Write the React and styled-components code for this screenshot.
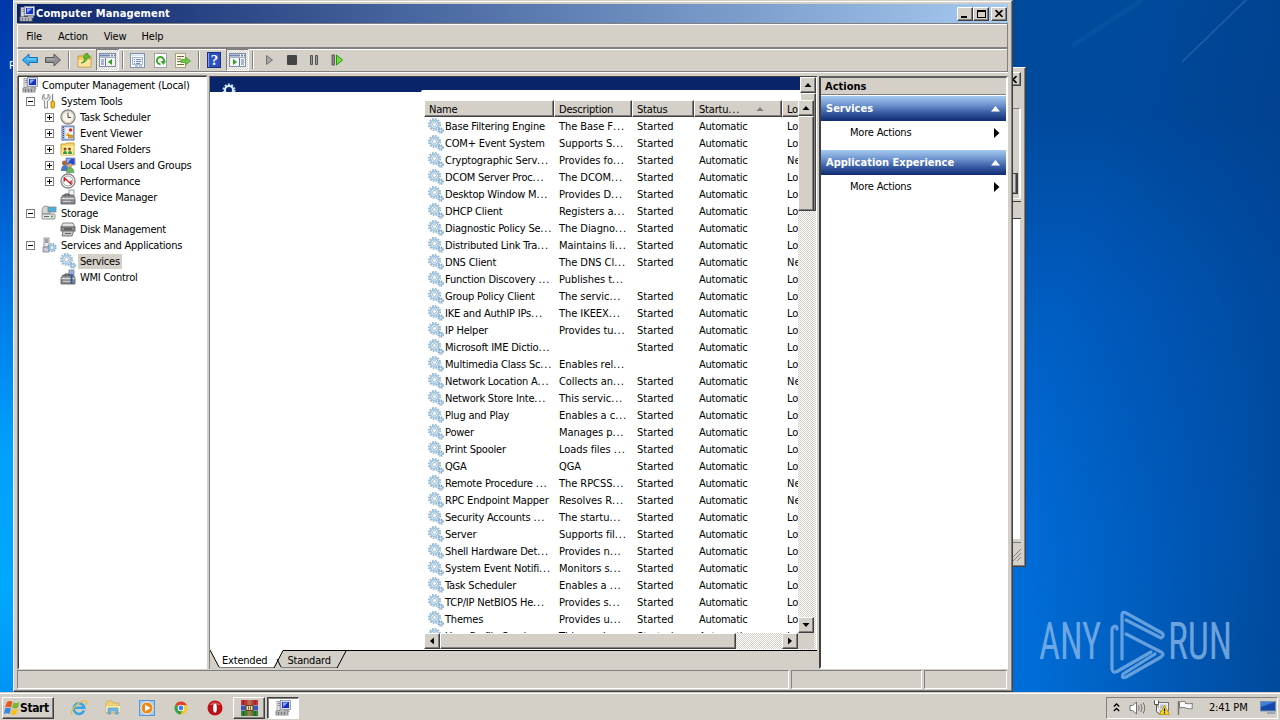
import React from "react";
import styled, { createGlobalStyle, css } from "styled-components";

const GlobalStyle = createGlobalStyle`
  * {
    box-sizing: border-box;
  }
  body {
    margin: 0;
    overflow: hidden;
    font-family: "DejaVu Sans Condensed", "DejaVu Sans", sans-serif;
    font-stretch: condensed;
    font-size: 11px;
    letter-spacing: -0.2px;
    color: #000;
  }
  svg {
    display: block;
    flex: none;
  }
`;

const raised = css`
  background: #d4d0c8;
  border: 1px solid;
  border-color: #fff #404040 #404040 #fff;
  box-shadow: inset -1px -1px 0 #808080;
`;
const sunken = css`
  border: 1px solid;
  border-color: #808080 #fff #fff #808080;
`;
const dither = css`
  background: repeating-conic-gradient(#fff 0 25%, #d4d0c8 0 50%) 0 0 / 2px 2px;
`;

/* ---------- desktop ---------- */

const Desktop = styled.div`
  position: relative;
  width: 1280px;
  height: 720px;
  overflow: hidden;
  background: linear-gradient(104deg, rgba(0, 122, 236, 0) 78%, rgba(0, 52, 120, 0.7) 100%),
    linear-gradient(180deg, #004a9c 0%, #004a9e 16%, #005cc0 42%, #006edc 75%, #0078e8 100%);
`;
const LeftStrip = styled.div`
  position: absolute;
  left: 0;
  top: 0;
  width: 16px;
  height: 692px;
  background: linear-gradient(180deg, #0038a8 0%, #0048b8 18%, #0070e0 38%, #00a0fc 65%, #00a8ff 85%, #0094f4 100%);
`;
const IconCaption = styled.span`
  position: absolute;
  left: 9px;
  top: 59px;
  color: #fff;
`;
const Rays = styled.svg`
  position: absolute;
  left: 1012px;
  top: 0;
`;
const Watermark = styled.svg`
  position: absolute;
  left: 1034px;
  top: 604px;
  overflow: visible;
`;

/* ---------- window behind ---------- */

const BackWindow = styled.div`
  position: absolute;
  left: 900px;
  top: 67px;
  width: 126px;
  height: 500px;
  padding: 4px 4px 3px;
  display: flex;
  flex-direction: column;
  ${raised}
`;
const BackTitle = styled.div`
  height: 18px;
  display: flex;
  justify-content: flex-end;
`;
const BackGroup = styled.div`
  margin-top: 18px;
  height: 91px;
  border: 1px solid;
  border-color: #808080 #fff #fff #808080;
  border-right: 2px solid #fff;
  display: flex;
  align-items: flex-end;
  justify-content: flex-end;
  padding: 0 1px 4px;
`;
const BackButton = styled.div`
  width: 70px;
  height: 21px;
  ${raised}
  border-top: 1px solid #404040;
  border-right: 2px solid #404040;
`;
const BackHeader = styled.div`
  margin-top: 2px;
  height: 18px;
  border-top: 1px solid #404040;
  border-bottom: 1px solid #404040;
`;
const BackBody = styled.div`
  flex: 1;
  background: #fff;
  border-right: 1px solid #d4d0c8;
`;
const BackStatus = styled.div`
  height: 21px;
  border-top: 1px solid #808080;
  margin-top: 3px;
  display: flex;
  align-items: flex-end;
  justify-content: flex-end;
  padding-bottom: 2px;
`;

/* ---------- main window ---------- */

const Window = styled.div`
  position: absolute;
  left: 13px;
  top: 0;
  width: 1000px;
  height: 692px;
  padding: 2px 4px 2px 4px;
  display: flex;
  flex-direction: column;
  background: #d4d0c8;
  border: 1px solid;
  border-color: #d4d0c8 #404040 #404040 #fff;
  box-shadow: inset -1px -1px 0 #808080, inset 0 1px 0 #fff;
`;
const TitleBar = styled.div`
  height: 19px;
  flex: none;
  margin: 1px 0 0 -1px;
  display: flex;
  align-items: center;
  padding: 0 1px 0 2px;
  background: linear-gradient(90deg, #0a246a, #a6caf0);
  color: #fff;
  font-weight: bold;
`;
const TitleText = styled.span`
  flex: 1;
  margin-left: 1px;
  letter-spacing: 0.15px;
`;
const WinButton = styled.div`
  width: 16px;
  height: 14px;
  margin-left: ${(p) => p.$gap || 0}px;
  display: flex;
  align-items: center;
  justify-content: center;
  ${raised}
`;
const Bar = styled.div`
  height: ${(p) => p.$h}px;
  flex: none;
  margin: 0 0 0 -1px;
  display: flex;
  align-items: center;
  border: 1px solid;
  border-color: #808080 #808080 #808080 #fff;
  box-shadow: inset 0 1px 0 #fff, 0 1px 0 #fff;
`;
const MenuItem = styled.span`
  width: ${(p) => p.$w}px;
  padding-top: 2px;
  text-align: center;
`;
const ToolSlot = styled.div`
  width: ${(p) => p.$w}px;
  height: 22px;
  flex: none;
  display: flex;
  align-items: center;
  justify-content: center;
  ${(p) =>
    p.$on &&
    css`
      ${sunken}
      ${dither}
    `}
`;
const ToolSep = styled.div`
  width: 2px;
  height: 18px;
  margin: 0 ${(p) => p.$mr || 4}px 0 ${(p) => p.$ml || 4}px;
  border-left: 1px solid #808080;
  border-right: 1px solid #fff;
`;
const Panes = styled.div`
  flex: 1;
  min-height: 0;
  margin-top: 4px;
  display: flex;
`;

/* tree */
const Tree = styled.div`
  width: 189px;
  flex: none;
  background: #fff;
  border: 1px solid;
  border-color: #404040 #fff #fff #404040;
  box-shadow: 0 -1px 0 #808080, -1px 0 0 #808080;
`;
const TreeRow = styled.div`
  height: 16px;
  display: flex;
  align-items: center;
  padding-left: ${(p) => p.$pad}px;
`;
const Expander = styled.div`
  width: 9px;
  height: 9px;
  margin-right: ${(p) => p.$mr}px;
  border: 1px solid #808080;
  position: relative;
  &::before,
  &::after {
    content: "";
    position: absolute;
    background: #000;
  }
  &::before {
    left: 1px;
    top: 3px;
    width: 5px;
    height: 1px;
  }
  &::after {
    display: ${(p) => (p.$open ? "none" : "block")};
    left: 3px;
    top: 1px;
    width: 1px;
    height: 5px;
  }
`;
const TreeLabel = styled.span`
  margin-left: 2px;
  padding: 0 2px;
  line-height: 15px;
  white-space: nowrap;
  letter-spacing: -0.24px;
  background: ${(p) => (p.$selected ? "#d4d0c8" : "none")};
`;

/* middle */
const Middle = styled.div`
  width: 608px;
  flex: none;
  margin-left: 2px;
  display: flex;
  flex-direction: column;
  border-top: 1px solid #404040;
  border-left: 1px solid #808080;
`;
const View = styled.div`
  height: 574px;
  display: flex;
  background: #fff;
`;
const Extended = styled.div`
  width: 590px;
  flex: none;
`;
const Banner = styled.div`
  height: 15px;
  padding: 5px 0 0 11px;
  background: #0a246a;
  overflow: hidden;
`;
const BannerCurve = styled.div`
  height: 2px;
  margin: -2px 0 0 211px;
  position: relative;
  background: #fff;
  border-radius: 3px 0 0 0;
`;
const List = styled.div`
  position: relative;
  margin: 8px 0 0 214px;
  width: 390px;
  height: 549px;
  display: grid;
  grid-template: 533px 16px / 374px 16px;
`;
const Table = styled.div`
  overflow: hidden;
  background: #fff;
`;
const columns = "130px 78px 62px 88px 60px";
const HeadRow = styled.div`
  display: grid;
  grid-template-columns: ${columns};
  width: 418px;
  height: 17px;
  margin-bottom: 1px;
`;
const HeadCell = styled.div`
  display: flex;
  align-items: center;
  justify-content: space-between;
  padding: 1px 17px 0 4px;
  ${raised}
`;
const Row = styled.div`
  display: grid;
  grid-template-columns: ${columns};
  width: 418px;
  height: 17px;
  align-items: center;
`;
const Cell = styled.div`
  display: flex;
  align-items: center;
  padding-left: ${(p) => (p.$first ? 4 : 5)}px;
  white-space: pre;
  letter-spacing: ${(p) => p.$ls || 0}px;
  svg {
    margin: -1px 1px 0 0;
  }
`;
const Dots = styled.span`
  letter-spacing: 0.8px;
`;
const Scroll = styled.div`
  display: flex;
  flex-direction: ${(p) => (p.$row ? "row" : "column")};
  ${dither}
`;
const ScrollButton = styled.div`
  width: 16px;
  height: 16px;
  flex: none;
  display: flex;
  align-items: center;
  justify-content: center;
  ${raised}
`;
const Thumb = styled.div`
  width: ${(p) => (p.$w ? `${p.$w}px` : "auto")};
  height: ${(p) => (p.$h ? `${p.$h}px` : "auto")};
  ${raised}
`;
const Fill = styled.div`
  flex: 1;
`;
const Corner = styled.div`
  background: #d4d0c8;
`;
const Tabs = styled.div`
  flex: 1;
  display: flex;
  align-items: flex-start;
  position: relative;
`;
const TabShapes = styled.svg`
  position: absolute;
  left: 0;
  top: -1px;
`;
const TabLabel = styled.span`
  position: relative;
  margin: 2px 0 0 ${(p) => p.$ml}px;
  line-height: 15px;
`;

/* actions */
const Actions = styled.div`
  width: 190px;
  margin-left: 2px;
  background: #fff;
  border: 2px solid;
  border-color: #606060 #fff #fff #404040;
`;
const ActionsTitle = styled.div`
  height: 17px;
  padding: 1px 0 0 4px;
  line-height: 15px;
  font-weight: bold;
  letter-spacing: 0;
  background: #d4d0c8;
  border-bottom: 1px solid #808080;
`;
const ActionsHead = styled.div`
  height: 25px;
  margin-top: 1px;
  padding: 0 6px 0 5px;
  display: flex;
  align-items: center;
  justify-content: space-between;
  color: #fff;
  font-weight: bold;
  letter-spacing: 0;
  background: linear-gradient(180deg, #a6caf0 0%, #6f95cf 35%, #3c5fa6 65%, #0f2a70 100%);
`;
const ActionsItem = styled.div`
  height: 28px;
  padding: 0 6px 5px 29px;
  display: flex;
  align-items: center;
  justify-content: space-between;
`;

const StatusBar = styled.div`
  height: 19px;
  flex: none;
  margin: 1px 0 0 -1px;
  display: flex;
  gap: 2px;
`;
const StatusCell = styled.div`
  width: ${(p) => p.$w}px;
  ${sunken}
`;

/* ---------- taskbar ---------- */

const Taskbar = styled.div`
  position: absolute;
  left: 0;
  top: 692px;
  width: 1280px;
  height: 28px;
  padding: 2px 2px 0 2px;
  display: flex;
  align-items: center;
  background: #d4d0c8;
  border-top: 1px solid #d4d0c8;
  box-shadow: inset 0 1px 0 #fff;
`;
const StartButton = styled.div`
  width: 52px;
  height: 22px;
  margin-right: 8px;
  padding-left: 1px;
  display: flex;
  align-items: center;
  font-weight: bold;
  font-size: 12px;
  letter-spacing: -0.4px;
  ${raised}
`;
const Quick = styled.div`
  width: ${(p) => p.$w || 34}px;
  display: flex;
  justify-content: center;
`;
const TaskButton = styled.div`
  width: 32px;
  height: 22px;
  margin: 0 1px;
  display: flex;
  align-items: center;
  justify-content: center;
  ${raised}
  ${(p) =>
    p.$active &&
    css`
      background: #fff;
      border-color: #404040 #fff #fff #404040;
      box-shadow: inset 1px 1px 0 #808080;
    `}
`;
const Tray = styled.div`
  width: 172px;
  height: 22px;
  margin-left: auto;
  padding: 0 1px 0 6px;
  display: flex;
  align-items: center;
  ${sunken}
`;
const Clock = styled.span`
  width: 43px;
  margin: 0 8px 0 7px;
  white-space: nowrap;
`;

/* ---------- icons ---------- */

const ComputerIcon = () => (
  <svg width="16" height="16" viewBox="0 0 16 16">
    <rect x="5.500" y=".5" width="10" height="9" fill="#d8dce8" stroke="#8890a8" strokeWidth=".8" />
    <rect x="7" y="2" width="7" height="6" fill="#1830c0" />
    <path d="M8 7V2.500h5z" fill="#88a8f8" />
    <path d="M9 10h5l1 2H8z" fill="#b8bcc8" />
    <rect x="2" y="1.500" width="3" height="9" fill="#e4e4e4" stroke="#999" strokeWidth=".8" />
    <path d="M3 3.500h2M3 5.500h2" stroke="#667" strokeWidth=".7" />
    <rect x="1" y="11" width="12" height="4" fill="#e0e0e0" stroke="#777" strokeWidth=".8" />
    <path d="M3.500 12v3M6.500 12v3M9.500 12v3M1 13h12" stroke="#667" strokeWidth=".8" />
  </svg>
);

const GearIcon = () => (
  <svg width="16" height="16" viewBox="0 0 16 16" fill="none">
    <circle cx="6.500" cy="6.500" r="5.600" stroke="#8cb0cc" strokeWidth="1.700" strokeDasharray="1.700 1.200" />
    <circle cx="6.500" cy="6.500" r="4" stroke="#a4c6de" strokeWidth="1.800" fill="#eef6fc" />
    <circle cx="6.500" cy="6.500" r="2" stroke="#7fa4c4" strokeWidth=".7" fill="#fff" />
    <circle cx="12.600" cy="12.600" r="2.500" stroke="#7ba2c4" strokeWidth="1.400" strokeDasharray="1.200 .8" />
    <circle cx="12.600" cy="12.600" r="1.500" stroke="#7eaad0" fill="#dcecf8" />
  </svg>
);

const ToolsIcon = () => (
  <svg width="16" height="16" viewBox="0 0 16 16">
    <path d="M3 1v4l2 1 2-1V1l2 2v3L6.500 8v7h-3V8L1.500 6V3z" fill="#f0f0f0" stroke="#777" strokeWidth=".8" />
    <path d="M11.500 1v7" stroke="#889" strokeWidth="1.300" />
    <rect x="10" y="8" width="3.400" height="7" rx="1" fill="#f4c020" stroke="#a87808" strokeWidth=".8" />
  </svg>
);
const ClockIcon = () => (
  <svg width="16" height="16" viewBox="0 0 16 16" fill="none">
    <circle cx="8" cy="8" r="7" fill="#f8f4e8" stroke="#8a8a8a" strokeWidth="1.400" />
    <circle cx="8" cy="8" r="5.600" stroke="#d8d0b8" />
    <path d="M8 3.500V8.500h3" stroke="#446" />
  </svg>
);
const EventIcon = () => (
  <svg width="16" height="16" viewBox="0 0 16 16">
    <rect x="2" y="1" width="12" height="14" fill="#b4c8ec" stroke="#5870a0" />
    <path d="M3.500 2v12" stroke="#445" strokeDasharray="1 1" />
    <rect x="5.500" y="2.500" width="7.500" height="11" fill="#f4f4ff" />
    <circle cx="10.500" cy="5" r="1.800" fill="#d83020" />
    <path d="M8 7l2.500 4h-5z" fill="#f0b820" />
    <rect x="8.500" y="10" width="4" height="3" fill="#e8a020" stroke="#a06000" strokeWidth=".5" />
  </svg>
);
const SharedIcon = () => (
  <svg width="16" height="16" viewBox="0 0 16 16">
    <path d="M1 3h5l1-1h7v12H1z" fill="#f6d868" stroke="#c8a030" />
    <path d="M3 5h11l-1 9H1z" fill="#fbe898" />
    <circle cx="5" cy="8" r="1.500" fill="#805020" />
    <circle cx="9.500" cy="8" r="1.500" fill="#805020" />
    <path d="M3 13q0-3 2-3t2 3zM8 13q0-3 2-3t2 3z" fill="#2c9848" />
  </svg>
);
const UsersIcon = () => (
  <svg width="16" height="16" viewBox="0 0 16 16">
    <rect x="6" y="1" width="9" height="7" fill="#2848c8" stroke="#a0a8c0" />
    <path d="M7 7V2h4z" fill="#90b0f8" />
    <circle cx="4.500" cy="6" r="2.500" fill="#a86830" />
    <path d="M1 14q0-6 4-6t4 6z" fill="#5078c0" />
    <circle cx="10" cy="8.500" r="2.200" fill="#d8a860" />
    <path d="M6.500 15.500q0-5 3.500-5t4 5z" fill="#70b860" stroke="#387838" strokeWidth=".5" />
  </svg>
);
const PerfIcon = () => (
  <svg width="16" height="16" viewBox="0 0 16 16" fill="none">
    <circle cx="8" cy="8" r="7" fill="#fff" stroke="#888" strokeWidth="1.300" />
    <circle cx="8" cy="8" r="5" stroke="#888" strokeWidth=".8" />
    <path d="M4.500 8.500V5l6.500 6V7.500" stroke="#d01818" strokeWidth="1.400" />
  </svg>
);
const DeviceIcon = ({ tool }) => (
  <svg width="16" height="16" viewBox="0 0 16 16">
    <rect x="9" y="1" width="5" height="9" fill={tool ? "#90b0e0" : "#f4f4f4"} stroke="#889" strokeWidth=".8" />
    <path d="M1 9l2-3h10l2 3v6H1z" fill="#888c90" stroke="#555" strokeWidth=".8" />
    <path d="M1.500 9.500h13" stroke="#dcdcdc" strokeWidth="1.400" />
    <path d="M5 7V5h4v2" fill="none" stroke="#444" />
    <path d="M3 12.500h8" stroke="#ccc" />
    {tool && <path d="M11.500 5v10" stroke="#3858a8" strokeWidth="2" />}
  </svg>
);
const StorageIcon = () => (
  <svg width="16" height="16" viewBox="0 0 16 16">
    <path d="M1 6q0-5 4-5t4 4v4H1z" fill="#d4d4d4" stroke="#888" strokeWidth=".8" />
    <rect x="7" y="2" width="8" height="5" fill="#48b0d8" stroke="#888" strokeWidth=".8" />
    <rect x="1" y="9" width="13" height="5" rx="1" fill="#e4e4e4" stroke="#777" strokeWidth=".8" />
    <circle cx="11" cy="11.500" r="1" fill="#38a030" />
    <path d="M3 11.500h5" stroke="#666" />
  </svg>
);
const DiskIcon = () => (
  <svg width="16" height="16" viewBox="0 0 16 16">
    <path d="M3 2h10l2 4H1z" fill="#e4e4e4" stroke="#666" strokeWidth=".8" />
    <rect x="1" y="6" width="14" height="4" fill="#909090" stroke="#555" strokeWidth=".8" />
    <path d="M4 8h8" stroke="#333" />
    <path d="M3 10h11l-2 5H2z" fill="#c4c4c4" stroke="#666" strokeWidth=".8" />
    <path d="M5 12.500h6" stroke="#666" />
  </svg>
);
const AppsIcon = () => (
  <svg width="16" height="16" viewBox="0 0 16 16" fill="none">
    <rect x="3" y="1" width="5" height="9" fill="#e8e8e8" stroke="#888" strokeWidth=".8" />
    <path d="M4 3h3M4 5h3" stroke="#556" />
    <path d="M2 10h6v5H2z" fill="#c8ccd4" stroke="#778" strokeWidth=".8" />
    <circle cx="11" cy="10.500" r="3.800" stroke="#7aa4c8" strokeWidth="1.600" strokeDasharray="1.600 1" />
    <circle cx="11" cy="10.500" r="2.300" stroke="#94bcdc" strokeWidth="1.600" fill="#eef6fc" />
  </svg>
);

const Arrow = ({ forward }) => (
  <svg width="16" height="14" viewBox="0 0 16 14">
    <path
      d={forward ? "M15.500 7L9 1v3.500H.5v5H9V13z" : "M.5 7L7 1v3.500h8.500v5H7V13z"}
      fill={forward ? "#909090" : "#38b0f0"}
      stroke={forward ? "#585858" : "#1870b8"}
      strokeWidth="1"
    />
    <path d={forward ? "M2 6h8" : "M5 6h9"} stroke={forward ? "#b8b8b8" : "#90dcff"} />
  </svg>
);
const UpFolderIcon = () => (
  <svg width="16" height="16" viewBox="0 0 16 16">
    <path d="M1 4h5l1-2h4v2h3v11H1z" fill="#f4cc60" stroke="#b89030" strokeWidth=".8" />
    <path d="M1.500 8h12v6.500h-12z" fill="#fce49c" />
    <path d="M4 11q3 0 4-5l-2-.5L10 1l3 5-2.500-.2Q9 11 4 11z" fill="#58c030" stroke="#2c8c18" strokeWidth=".7" />
  </svg>
);
const PaneIcon = ({ flip }) => (
  <svg width="17" height="14" viewBox="0 0 17 14">
    <rect x=".5" y=".5" width="16" height="13" fill="#f4f4f4" stroke="#8090a8" />
    <path d="M1 2.500h15" stroke="#7088b0" strokeWidth="2" strokeDasharray="10 1 2 1" />
    <path d="M1 4.500h15" stroke="#a8b4c8" />
    <path d={flip ? "M10.500 5v8M12 7h3M12 9h3M12 11h3" : "M6.500 5v8M2 7h3M2 9h3M2 11h3"} stroke="#6078a0" />
    <path d={flip ? "M4 6v6l4-3z" : "M13 6v6L9 9z"} fill="#30a020" />
  </svg>
);
const PropsIcon = () => (
  <svg width="15" height="15" viewBox="0 0 15 15">
    <rect x=".5" y=".5" width="14" height="14" fill="#fff" stroke="#8094b0" />
    <path d="M1 2h13" stroke="#c4d0e4" />
    <rect x="2.500" y="4.500" width="10" height="7" fill="#f0f4fc" stroke="#90a4c4" strokeWidth=".8" />
    <path d="M4 6.500h1M6 6.500h5M4 8.500h1M6 8.500h5M4 10.500h1M6 10.500h4M5 13h3M9 13h3" stroke="#6080b0" strokeWidth=".9" />
  </svg>
);
const RefreshIcon = () => (
  <svg width="13" height="15" viewBox="0 0 13 15" fill="none">
    <rect x=".5" y=".5" width="12" height="14" fill="#fff" stroke="#a0a0a8" />
    <path d="M6.500 11.200A3.600 3.600 0 1 1 10 8" stroke="#38a828" strokeWidth="1.900" />
    <path d="M6.500 8h5.500l-2.500 4z" fill="#38a828" />
  </svg>
);
const ExportIcon = () => (
  <svg width="16" height="15" viewBox="0 0 16 15">
    <rect x=".5" y=".5" width="10" height="14" fill="#fffbe4" stroke="#a8a088" />
    <path d="M2 3.500h7M2 6h4M2 8.500h4M2 11.500h7" stroke="#706848" />
    <path d="M6 6.500h4.500V4l5 4-5 4V9.500H6z" fill="#68c840" stroke="#38901c" strokeWidth=".6" />
  </svg>
);
const HelpIcon = () => (
  <svg width="14" height="16" viewBox="0 0 14 16">
    <rect x=".5" y=".5" width="13" height="15" fill="#2c50c0" stroke="#183080" />
    <path d="M1.500 1v14" stroke="#88a0e8" />
    <text x="7.500" y="13" fontSize="15" fontWeight="bold" fill="#fff" textAnchor="middle" fontFamily="Liberation Serif, serif">?</text>
  </svg>
);
const PlayIcon = () => (
  <svg width="9" height="12" viewBox="0 0 9 12">
    <path d="M1.500 1.500v9l6-4.500z" fill="#a8a8a8" stroke="#707070" />
  </svg>
);
const ResumeIcon = () => (
  <svg width="13" height="12" viewBox="0 0 13 12">
    <rect x="1" y="1" width="2.500" height="10" fill="#888" stroke="#444" strokeWidth=".7" />
    <path d="M5.500 1v10l6-5z" fill="#70e040" stroke="#209810" />
  </svg>
);
const StopIcon = () => (
  <svg width="10" height="10" viewBox="0 0 10 10">
    <rect width="10" height="10" rx="1" fill="#444" />
  </svg>
);
const PauseIcon = () => (
  <svg width="9" height="10" viewBox="0 0 9 10">
    <path d="M.5.5h2v9h-2zM5.500.5h2v9h-2z" fill="#999" stroke="#555" />
  </svg>
);
const Triangle = ({ dir, color = "#000" }) => {
  const turn = { up: 0, right: 90, down: 180, left: 270 }[dir];
  return (
    <svg width="8" height="8" viewBox="0 0 8 8">
      <path d="M4 2L7.500 6h-7z" fill={color} transform={`rotate(${turn} 4 4)`} />
    </svg>
  );
};
const MoreArrow = () => (
  <svg width="6" height="10" viewBox="0 0 6 10">
    <path d="M0 0v10l5.500-5z" />
  </svg>
);
const CollapseArrow = () => (
  <svg width="9" height="6" viewBox="0 0 9 6">
    <path d="M0 5.500h9L4.500 0z" fill="#fff" />
  </svg>
);
const CloseGlyph = () => (
  <svg width="8" height="7" viewBox="0 0 8 7">
    <path d="M.5 0l7 7M7.500 0l-7 7" stroke="#000" strokeWidth="1.600" />
  </svg>
);

/* taskbar icons */
const WindowsLogo = () => (
  <svg width="16" height="16" viewBox="0 0 16 16">
    <path d="M3 2q3-2 5.500 0L7 7.500q-3-1.500-6 0z" fill="#e85820" />
    <path d="M9.500 2.500q3 1.500 6-.5L14 7.500q-3 2-6 0z" fill="#78b830" />
    <path d="M1 8.500q3-1.500 6 0L5.500 14Q3 12.500 0 14z" fill="#3888e0" />
    <path d="M8 9q3 1.500 6 0l-1.500 5q-3 2-6 0z" fill="#f8c020" />
  </svg>
);
const IeIcon = () => (
  <svg width="18" height="17" viewBox="0 0 18 17" fill="none">
    <path d="M14 11.500A5.300 5.300 0 1 1 14.300 8.800H5" stroke="#38a4e4" strokeWidth="2.500" />
    <path d="M2 15.500Q-.5 13 6 6.500T16.500 2Q17.500 4 15 6" stroke="#e8c040" strokeWidth="1.300" />
  </svg>
);
const ExplorerIcon = () => (
  <svg width="16" height="15" viewBox="0 0 16 15">
    <path d="M1 3l1-2h5l1 2h6v10H1z" fill="#ecd078" stroke="#c8a850" strokeWidth=".7" />
    <path d="M1 6h14v6H1z" fill="#f8e8a8" />
    <path d="M3 14V9q0-1 1-1h8q1 0 1 1v5h-2.500v-3h-5v3z" fill="#70b8e8" stroke="#4890c8" strokeWidth=".6" />
  </svg>
);
const MediaIcon = () => (
  <svg width="16" height="16" viewBox="0 0 16 16">
    <rect x=".5" y=".5" width="15" height="15" fill="#a0ccf0" stroke="#5898d0" />
    <circle cx="8" cy="8" r="6" fill="#f08818" stroke="#fff" strokeWidth=".8" />
    <path d="M6 4.500v7L11.500 8z" fill="#fff" />
  </svg>
);
const ChromeIcon = () => (
  <svg width="14" height="14" viewBox="0 0 14 14">
    <circle cx="7" cy="7" r="6.500" fill="#f8c820" />
    <path d="M7 7L1.400 3.700A6.500 6.500 0 0 1 12.800 4H7z" fill="#e04030" />
    <path d="M1.400 3.700A6.500 6.500 0 0 0 6.500 13.500L9 9z" fill="#38a050" />
    <circle cx="7" cy="7" r="3.300" fill="#fff" />
    <circle cx="7" cy="7" r="2.400" fill="#4080e8" />
  </svg>
);
const OperaIcon = () => (
  <svg width="16" height="16" viewBox="0 0 16 16">
    <circle cx="8" cy="8" r="7.500" fill="#c01018" />
    <path d="M2.500 5Q8-1 13.500 5" fill="#e86060" />
    <ellipse cx="8" cy="8" rx="2.300" ry="5.200" fill="#fff" stroke="#800008" strokeWidth=".8" />
  </svg>
);
const RarIcon = () => (
  <svg width="17" height="16" viewBox="0 0 17 16">
    <path d="M0 0h17v5H0z" fill="#c83040" />
    <path d="M0 5.500h17v5H0z" fill="#3858b8" />
    <path d="M0 11h17v5H0z" fill="#308838" />
    <rect x="6.500" width="4" height="16" fill="#a87840" />
    <rect x="5" y="5.500" width="7" height="5" fill="#e8d8a8" stroke="#604010" />
    <path d="M7.500 6.500v3M9.500 6.500v3M2.500 0v5M14 0v5M2.500 11v5M14 11v5" stroke="#402810" strokeWidth=".7" />
  </svg>
);
const ChevronsIcon = () => (
  <svg width="7" height="9" viewBox="0 0 7 9" fill="none" stroke="#000" strokeWidth="1.300">
    <path d="M.8 3.500l2.700-2.500 2.700 2.500M.8 8l2.700-2.500L6.200 8" />
  </svg>
);
const SpeakerIcon = () => (
  <svg width="17" height="14" viewBox="0 0 17 14" fill="none" stroke="#707070">
    <path d="M1 4.500h2.500L7.500 1v12L3.500 9.500H1z" fill="#fff" />
    <path d="M9.500 4.500q1.500 2.500 0 5M11.800 3q2.500 4 0 8M14 1.500q3.500 5.500 0 11" />
  </svg>
);
const NetworkIcon = () => (
  <svg width="17" height="15" viewBox="0 0 17 15">
    <rect x="5" y="2.500" width="10.500" height="8.500" fill="#f0f0f0" stroke="#777" />
    <rect x="7" y="4.500" width="6.500" height="4.500" fill="#c0c4c8" />
    <path d="M1.500.5v4h4v-4M3.500 4.500V11q0 2.500 4 2.500" fill="#fff" stroke="#555" />
    <path d="M11.500 5.500l5 9h-10z" fill="#f8d818" stroke="#a88800" strokeWidth=".7" />
    <path d="M11.500 8.500v3M11.500 12.300v1.200" stroke="#000" strokeWidth="1.200" />
  </svg>
);
const FlagIcon = () => (
  <svg width="17" height="15" viewBox="0 0 17 15">
    <path d="M2.500 2q3-1.500 6 0v1.500q4 .5 7 0-1 3 0 5-3 1-7-.5-3-1.500-6 0z" fill="#fff" stroke="#777" />
    <path d="M1.500 1v14" stroke="#777" strokeWidth="1.500" />
  </svg>
);
const ScreenIcon = () => (
  <svg width="16" height="13" viewBox="0 0 16 13">
    <rect x=".5" y=".5" width="15" height="9.500" fill="#1448a8" stroke="#7890b0" />
    <path d="M1 1h14L1 6z" fill="#3c80d8" />
    <path d="M7 12h8" stroke="#8898b0" strokeWidth="1.500" />
  </svg>
);

/* ---------- data ---------- */

const tree = [
  { label: "Computer Management (Local)", icon: ComputerIcon, pad: 3 },
  { label: "System Tools", icon: ToolsIcon, level: 1, open: true },
  { label: "Task Scheduler", icon: ClockIcon, level: 2 },
  { label: "Event Viewer", icon: EventIcon, level: 2 },
  { label: "Shared Folders", icon: SharedIcon, level: 2 },
  { label: "Local Users and Groups", icon: UsersIcon, level: 2 },
  { label: "Performance", icon: PerfIcon, level: 2 },
  { label: "Device Manager", icon: DeviceIcon, pad: 41 },
  { label: "Storage", icon: StorageIcon, level: 1, open: true },
  { label: "Disk Management", icon: DiskIcon, pad: 41 },
  { label: "Services and Applications", icon: AppsIcon, level: 1, open: true },
  { label: "Services", icon: GearIcon, pad: 41, selected: true },
  { label: "WMI Control", icon: () => <DeviceIcon tool />, pad: 41 },
];

const services = [
  ["Base Filtering Engine", "The Base F...", 1, "Lo"],
  ["COM+ Event System", "Supports S...", 1, "Lo"],
  ["Cryptographic Serv...", "Provides fo...", 1, "Ne"],
  ["DCOM Server Proc...", "The DCOM...", 1, "Lo"],
  ["Desktop Window M...", "Provides D...", 1, "Lo"],
  ["DHCP Client", "Registers a...", 1, "Lo"],
  ["Diagnostic Policy Se...", "The Diagno...", 1, "Lo"],
  ["Distributed Link Tra...", "Maintains li...", 1, "Lo"],
  ["DNS Client", "The DNS Cl...", 1, "Ne"],
  ["Function Discovery ...", "Publishes t...", 0, "Lo"],
  ["Group Policy Client", "The servic...", 1, "Lo"],
  ["IKE and AuthIP IPs...", "The IKEEX...", 1, "Lo"],
  ["IP Helper", "Provides tu...", 1, "Lo"],
  ["Microsoft IME Dictio...", "", 1, "Lo"],
  ["Multimedia Class Sc...", "Enables rel...", 0, "Lo"],
  ["Network Location A...", "Collects an...", 1, "Ne"],
  ["Network Store Inte...", "This servic...", 1, "Lo"],
  ["Plug and Play", "Enables a c...", 1, "Lo"],
  ["Power", "Manages p...", 1, "Lo"],
  ["Print Spooler", "Loads files ...", 1, "Lo"],
  ["QGA", "QGA", 1, "Lo"],
  ["Remote Procedure ...", "The RPCSS...", 1, "Ne"],
  ["RPC Endpoint Mapper", "Resolves R...", 1, "Ne"],
  ["Security Accounts ...", "The startu...", 1, "Lo"],
  ["Server", "Supports fil...", 1, "Lo"],
  ["Shell Hardware Det...", "Provides n...", 1, "Lo"],
  ["System Event Notifi...", "Monitors s...", 1, "Lo"],
  ["Task Scheduler", "Enables a ...", 1, "Lo"],
  ["TCP/IP NetBIOS He...", "Provides s...", 1, "Lo"],
  ["Themes", "Provides u...", 1, "Lo"],
  ["User Profile Service", "This servic...", 1, "Lo"],
];

// the dots of a trimmed text are set wider than the text itself
const Trimmed = ({ text }) => {
  if (!text.endsWith("...")) return <span>{text}</span>;
  return (
    <span>
      {text.slice(0, -3)}
      <Dots>...</Dots>
    </span>
  );
};

const ServiceList = () => (
  <List>
    <Table>
      <HeadRow>
        <HeadCell>Name</HeadCell>
        <HeadCell>Description</HeadCell>
        <HeadCell>Status</HeadCell>
        <HeadCell>
          <Trimmed text="Startu..." /> <Triangle dir="up" color="#808080" />
        </HeadCell>
        <HeadCell>Lo</HeadCell>
      </HeadRow>
      {services.map(([name, description, started, logOn]) => (
        <Row key={name}>
          <Cell $first $ls={-0.2}>
            <GearIcon />
            <Trimmed text={name} />
          </Cell>
          <Cell $ls={-0.05}>
            <Trimmed text={description} />
          </Cell>
          <Cell>{started ? "Started" : ""}</Cell>
          <Cell $ls={-0.25}>Automatic</Cell>
          <Cell>{logOn}</Cell>
        </Row>
      ))}
    </Table>
    <Scroll>
      <ScrollButton>
        <Triangle dir="up" />
      </ScrollButton>
      <Thumb $h={95} />
      <Fill />
      <ScrollButton>
        <Triangle dir="down" />
      </ScrollButton>
    </Scroll>
    <Scroll $row>
      <ScrollButton>
        <Triangle dir="left" />
      </ScrollButton>
      <Thumb $w={296} />
      <Fill />
      <ScrollButton>
        <Triangle dir="right" />
      </ScrollButton>
    </Scroll>
    <Corner />
  </List>
);

const App = () => {
  return (
    <Desktop>
      <GlobalStyle />
      <LeftStrip />
      <IconCaption>P</IconCaption>
      <Rays width="268" height="180">
        <path d="M238-4L170 62" stroke="#6ca0d0" strokeOpacity=".3" strokeWidth="1.500" />
        <path d="M130 0L60 46" stroke="#4c90c0" strokeOpacity=".1" strokeWidth="5" />
      </Rays>
      <Watermark width="204" height="76" fill="none">
        <g fill="#90bcec" fillOpacity=".75" fontFamily="Roboto, sans-serif" fontSize="52" fontWeight="400">
          <text x="5" y="55" textLength="62" lengthAdjust="spacingAndGlyphs">ANY</text>
          <text x="134" y="55" textLength="64" lengthAdjust="spacingAndGlyphs">RUN</text>
        </g>
        <g stroke="#90bcec" strokeOpacity=".7" strokeWidth="3.200" strokeLinecap="round" strokeLinejoin="round">
          <path d="M83 25q0-4-3-2.500-2 1-2 4v38q0 5 5 3L117 48" />
          <path d="M88 55V22 11q0-4 4-2l36 20q3 3-1 5L92 16" />
          <path d="M92 30l35 18q4 2 0 5L92 73q-5 2-3-3l32-20" />
        </g>
      </Watermark>

      <BackWindow>
        <BackTitle>
          <WinButton>
            <CloseGlyph />
          </WinButton>
        </BackTitle>
        <BackGroup>
          <BackButton />
        </BackGroup>
        <BackHeader />
        <BackBody />
        <BackStatus>
          <svg width="12" height="12" stroke="#808080">
            <path d="M0 12L12 0M4 12l8-8M8 12l4-4" />
          </svg>
        </BackStatus>
      </BackWindow>

      <Window>
        <TitleBar>
          <ComputerIcon />
          <TitleText>Computer Management</TitleText>
          <WinButton>
            <svg width="8" height="8">
              <path d="M0 6h6v2H0z" />
            </svg>
          </WinButton>
          <WinButton>
            <svg width="9" height="8">
              <path d="M0 0h9v8H0zM1 2v5h7V2z" fillRule="evenodd" />
            </svg>
          </WinButton>
          <WinButton $gap={2}>
            <CloseGlyph />
          </WinButton>
        </TitleBar>
        <Bar $h={25}>
          <MenuItem $w={32}>File</MenuItem>
          <MenuItem $w={46}>Action</MenuItem>
          <MenuItem $w={38}>View</MenuItem>
          <MenuItem $w={37}>Help</MenuItem>
        </Bar>
        <Bar $h={24}>
          <ToolSlot $w={24}>
            <Arrow />
          </ToolSlot>
          <ToolSlot $w={22}>
            <Arrow forward />
          </ToolSlot>
          <ToolSep />
          <ToolSlot $w={22}>
            <UpFolderIcon />
          </ToolSlot>
          <ToolSlot $w={23} $on>
            <PaneIcon />
          </ToolSlot>
          <ToolSep $ml={3} $mr={2} />
          <ToolSlot $w={22}>
            <PropsIcon />
          </ToolSlot>
          <ToolSlot $w={24}>
            <RefreshIcon />
          </ToolSlot>
          <ToolSlot $w={22}>
            <ExportIcon />
          </ToolSlot>
          <ToolSep $mr={2} />
          <ToolSlot $w={24}>
            <HelpIcon />
          </ToolSlot>
          <ToolSlot $w={23} $on>
            <PaneIcon flip />
          </ToolSlot>
          <ToolSep $ml={3} />
          <ToolSlot $w={22}>
            <PlayIcon />
          </ToolSlot>
          <ToolSlot $w={23}>
            <StopIcon />
          </ToolSlot>
          <ToolSlot $w={23}>
            <PauseIcon />
          </ToolSlot>
          <ToolSlot $w={23}>
            <ResumeIcon />
          </ToolSlot>
        </Bar>

        <Panes>
          <Tree>
            {tree.map(({ label, icon: Icon, level, open, pad, selected }) => (
              <TreeRow key={label} $pad={level ? 7 + (level - 1) * 19 : pad}>
                {level && <Expander $open={open} $mr={6} />}
                <Icon />
                <TreeLabel $selected={selected}>{label}</TreeLabel>
              </TreeRow>
            ))}
          </Tree>

          <Middle>
            <View>
              <Extended>
                <Banner>
                  <svg width="16" height="16" fill="none">
                    <circle cx="8" cy="8" r="5.500" stroke="#b8dcf4" strokeWidth="2" strokeDasharray="2 1.450" />
                    <circle cx="8" cy="8" r="4" stroke="#d8f0fc" strokeWidth="2" />
                  </svg>
                </Banner>
                <BannerCurve />
                <ServiceList />
              </Extended>
              <Scroll>
                <ScrollButton>
                  <Triangle dir="up" />
                </ScrollButton>
                <Thumb $h={118} />
                <Fill />
              </Scroll>
            </View>
            <Tabs>
              <TabShapes width="607" height="18">
                <path d="M0 0h73l-9 17H9z" fill="#fff" />
                <path d="M0 0l9 17" stroke="#000" />
                <path d="M9 17.500h55M71 17.500h57" stroke="#808080" />
                <path d="M64 18L73 .5H607M67 9l4 8M136 1l-9 17" stroke="#000" fill="none" />
              </TabShapes>
              <TabLabel $ml={12}>Extended</TabLabel>
              <TabLabel $ml={20}>Standard</TabLabel>
            </Tabs>
          </Middle>

          <Actions>
            <ActionsTitle>Actions</ActionsTitle>
            <ActionsHead>
              Services <CollapseArrow />
            </ActionsHead>
            <ActionsItem>
              More Actions <MoreArrow />
            </ActionsItem>
            <ActionsHead>
              Application Experience <CollapseArrow />
            </ActionsHead>
            <ActionsItem>
              More Actions <MoreArrow />
            </ActionsItem>
          </Actions>
        </Panes>

        <StatusBar>
          <StatusCell $w={772} />
          <StatusCell $w={131} />
          <StatusCell $w={83} />
        </StatusBar>
      </Window>

      <Taskbar>
        <StartButton>
          <WindowsLogo />
          Start
        </StartButton>
        <Quick>
          <IeIcon />
        </Quick>
        <Quick>
          <ExplorerIcon />
        </Quick>
        <Quick>
          <MediaIcon />
        </Quick>
        <Quick>
          <ChromeIcon />
        </Quick>
        <Quick>
          <OperaIcon />
        </Quick>
        <TaskButton>
          <RarIcon />
        </TaskButton>
        <TaskButton $active>
          <ComputerIcon />
        </TaskButton>
        <Tray>
          <ChevronsIcon />
          <Quick $w={34}>
            <SpeakerIcon />
          </Quick>
          <Quick $w={14}>
            <NetworkIcon />
          </Quick>
          <Quick $w={34}>
            <FlagIcon />
          </Quick>
          <Clock>2:41 PM</Clock>
          <ScreenIcon />
        </Tray>
      </Taskbar>
    </Desktop>
  );
};

export default App;
